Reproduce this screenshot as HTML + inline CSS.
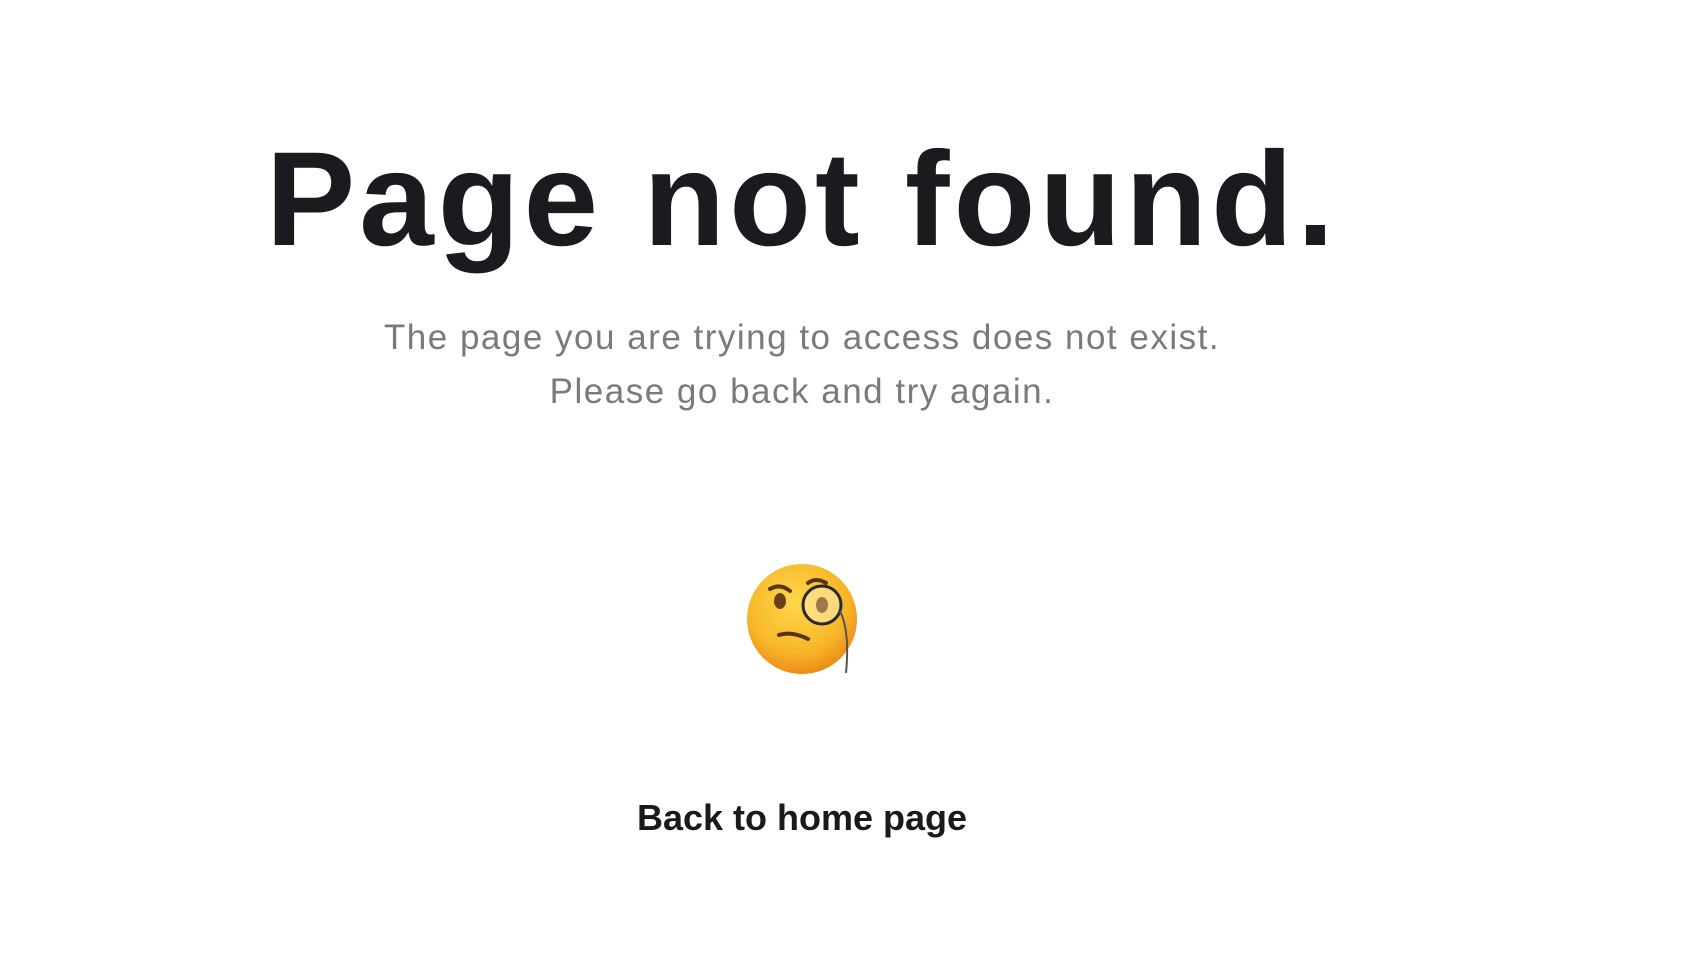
<!DOCTYPE html>
<html><head><meta charset="utf-8"><style>
html,body{margin:0;background:#fff;width:1697px;height:967px;overflow:hidden}
.c{position:absolute;left:0;width:1604px;text-align:center;font-family:"Liberation Sans",sans-serif}
h1{position:absolute;left:0;width:1604px;top:133px;margin:0;text-align:center;font:bold 134px/1 "Liberation Sans",sans-serif;letter-spacing:4px;color:#1b1a1f}
</style></head><body>
<h1>Page not found.</h1>
<div class="c" style="top:311px;font-size:35px;line-height:54px;letter-spacing:1.5px;color:#7a7a7a">The page you are trying to access does not exist.<br>Please go back and try again.</div>
<svg style="position:absolute;left:746px;top:561px" width="118" height="120" viewBox="0 0 118 120">
<defs><radialGradient id="g" cx="45%" cy="35%" r="65%"><stop offset="0" stop-color="#ffd84a"/><stop offset=".7" stop-color="#f8b62a"/><stop offset="1" stop-color="#ec8d17"/></radialGradient></defs>
<circle cx="56" cy="58" r="55" fill="url(#g)"/>
<path d="M24 28 Q34 22 44 30" stroke="#5a3510" stroke-width="4" fill="none" stroke-linecap="round"/>
<path d="M62 22 Q70 16 80 22" stroke="#5a3510" stroke-width="4" fill="none" stroke-linecap="round"/>
<ellipse cx="34" cy="40" rx="6" ry="8" fill="#6b4015"/>
<circle cx="76" cy="44" r="19" fill="#fde9a8" fill-opacity=".6" stroke="#2a2a2a" stroke-width="3"/>
<ellipse cx="76" cy="44" rx="6" ry="8" fill="#9a7a4a"/>
<path d="M33 74 Q46 70 62 78" stroke="#5a3510" stroke-width="4" fill="none" stroke-linecap="round"/>
<path d="M94 50 Q104 70 100 112" stroke="#555" stroke-width="2" fill="none"/>
</svg>
<div class="c" style="top:797px;font-size:36px;line-height:42px;font-weight:bold;color:#1a1a1a">Back to home page</div>
</body></html>
